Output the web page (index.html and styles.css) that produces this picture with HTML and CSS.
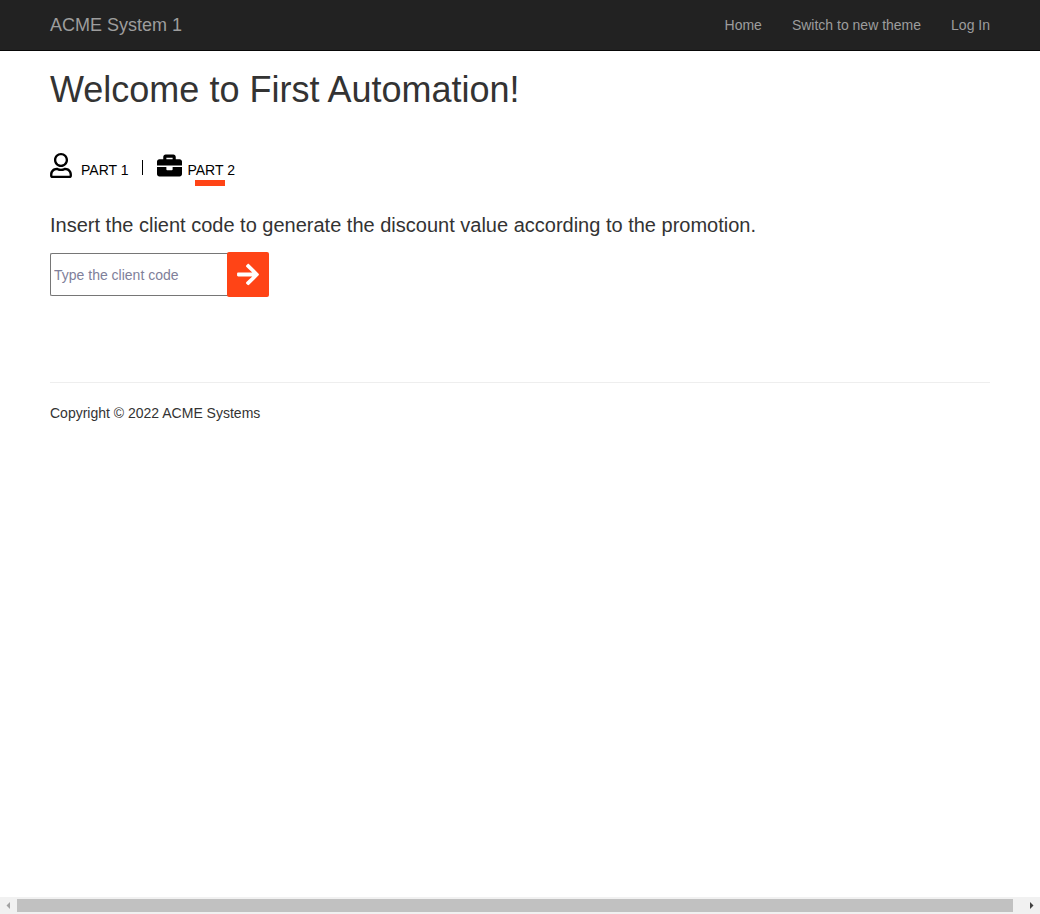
FILE: index.html
```
<!DOCTYPE html>
<html lang="en">
<head>
<meta charset="utf-8">
<title>ACME System 1</title>
<link rel="stylesheet" href="styles.css">
</head>
<body>
<header class="navbar">
  <a class="brand">ACME System 1</a>
  <nav class="links"><a>Home</a><a>Switch to new theme</a><a>Log In</a></nav>
</header>
<main class="content">
  <h1 class="title">Welcome to First Automation!</h1>
  <div class="tabs">
    <svg class="icon-user" viewBox="0 0 448 512"><path d="M313.600 304c-28.700 0-42.500 16-89.600 16-47.100 0-60.800-16-89.600-16C60.200 304 0 364.200 0 438.400V464c0 26.500 21.500 48 48 48h352c26.500 0 48-21.500 48-48v-25.600c0-74.200-60.200-134.400-134.400-134.400zM400 464H48v-25.600c0-47.600 38.800-86.400 86.400-86.400 14.600 0 38.300 16 89.600 16 51.700 0 74.900-16 89.600-16 47.600 0 86.400 38.800 86.400 86.400V464zM224 288c79.500 0 144-64.500 144-144S303.500 0 224 0 80 64.500 80 144s64.500 144 144 144zm0-240c52.900 0 96 43.100 96 96s-43.100 96-96 96-96-43.100-96-96 43.100-96 96-96z"/></svg>
    <span class="tab first">PART 1</span>
    <span class="divider"></span>
    <svg class="icon-case" viewBox="0 0 512 512"><path d="M320 336c0 8.840-7.160 16-16 16h-96c-8.840 0-16-7.160-16-16v-48H0v144c0 25.600 22.400 48 48 48h416c25.600 0 48-22.400 48-48V288H320v48zm144-208h-80V80c0-25.600-22.400-48-48-48H176c-25.600 0-48 22.400-48 48v48H48c-25.600 0-48 22.400-48 48v80h512v-80c0-25.600-22.400-48-48-48zm-144 0H192V96h128v32z"/></svg>
    <span class="tab active">PART 2</span>
  </div>
  <p class="lead">Insert the client code to generate the discount value according to the promotion.</p>
  <form class="code-form">
    <input class="code" type="text" placeholder="Type the client code">
    <button class="go" type="button" aria-label="Submit"><svg class="arrow" viewBox="0 0 448 512"><path d="M190.500 66.900l22.200-22.200c9.400-9.400 24.600-9.400 33.900 0L441 239c9.400 9.400 9.400 24.600 0 33.900L246.600 467.300c-9.400 9.400-24.600 9.400-33.900 0l-22.200-22.200c-9.500-9.500-9.300-25 .4-34.300L311.400 296H24c-13.300 0-24-10.700-24-24v-32c0-13.300 10.700-24 24-24h287.400L190.900 101.200c-9.800-9.300-10-24.800-.4-34.300z"/></svg></button>
  </form>
  <footer class="footer">Copyright © 2022 ACME Systems</footer>
</main>
<div class="scrollbar">
  <svg class="scroll-btn" viewBox="0 0 17 17"><path fill="#a3a3a3" d="M10 5v7L6.500 8.500z"/></svg>
  <div class="thumb"></div>
  <svg class="scroll-btn end" viewBox="0 0 17 17"><path fill="#404040" d="M7 5v7l3.500-3.500z"/></svg>
</div>
</body>
</html>
```
FILE: styles.css
```
* { box-sizing: border-box; }
body {
  margin: 0;
  height: 914px;
  display: flex;
  flex-direction: column;
  overflow: hidden;
  background: #fff;
  color: #333;
  font: 14px/20px "Liberation Sans", Arial, sans-serif;
}
.navbar {
  height: 51px;
  padding: 0 50px;
  display: flex;
  justify-content: space-between;
  background: #222;
  border-bottom: 1px solid #080808;
  color: #9d9d9d;
  line-height: 50px;
}
.brand { font-size: 18px; }
.links { display: flex; gap: 30px; }
.content { flex: 1; padding: 0 50px; }
.title { margin: 19px 0 0; font-size: 36px; font-weight: 400; line-height: 40px; }
.tabs { display: flex; height: 35px; margin-top: 43px; color: #000; }
.icon-user { width: 22px; height: 25px; }
.icon-case { width: 25px; height: 25px; margin-left: 14px; }
.tab { height: 20px; margin-top: 7px; }
.first { margin-left: 9px; }
.divider { width: 1px; height: 15px; margin: 7px 0 0 14px; background: #000; }
.active { margin-left: 5px; }
.active::after {
  content: "";
  display: block;
  width: 30px;
  height: 6px;
  margin-left: 8px;
  background: #ff4416;
}
.lead { margin: 27px 0 0; font-size: 20px; line-height: 20px; }
.code-form { display: flex; align-items: center; height: 45px; margin-top: 17px; }
.code {
  width: 178px;
  height: 43px;
  padding: 1px 3px;
  border: 1px solid #767676;
  border-right: 0;
  border-radius: 2px 0 0 2px;
  font: 14px "Liberation Sans", Arial, sans-serif;
}
.code::placeholder { color: #80809a; opacity: 1; }
.go {
  width: 42px;
  height: 45px;
  margin-left: -1px;
  padding: 0;
  border: 0;
  border-radius: 2px;
  background: #ff4416;
  display: flex;
  align-items: center;
  justify-content: center;
}
.arrow { width: 22px; height: 25px; fill: #fff; }
.footer { margin-top: 85px; padding-top: 20px; border-top: 1px solid #eee; }
.scrollbar { display: flex; height: 17px; background: #f1f1f1; }
.scroll-btn { width: 17px; height: 17px; }
.thumb { width: 996px; height: 13px; margin-top: 2px; background: #c1c1c1; }
.end { margin-left: auto; }
```
